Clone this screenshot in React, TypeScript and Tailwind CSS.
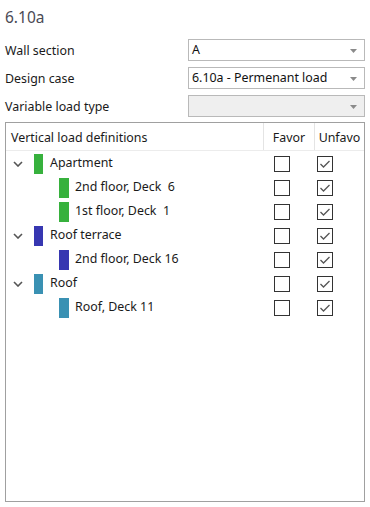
import React from 'react';

type Row = {
  label: string;
  color: string;
  level: number;
};

const rows: Row[] = [
  { label: 'Apartment', color: 'bg-[#37b13d]', level: 0 },
  { label: '2nd floor, Deck  6', color: 'bg-[#37b13d]', level: 1 },
  { label: '1st floor, Deck  1', color: 'bg-[#37b13d]', level: 1 },
  { label: 'Roof terrace', color: 'bg-[#3737b1]', level: 0 },
  { label: '2nd floor, Deck 16', color: 'bg-[#3737b1]', level: 1 },
  { label: 'Roof', color: 'bg-[#3a91b3]', level: 0 },
  { label: 'Roof, Deck 11', color: 'bg-[#3a91b3]', level: 1 },
];

function Arrow() {
  return (
    <svg width="7" height="4" viewBox="0 0 7 4" className="absolute right-[7px] top-[9px]">
      <path d="M0 0 H7 L3.5 4 Z" fill="#8a8a8a" />
    </svg>
  );
}

function Select({ value, disabled }: { value?: string; disabled?: boolean }) {
  return (
    <div
      className={`relative h-[22px] w-[177px] border border-[#b9b9b9] flex items-center pl-[3px] pt-[1px] ${
        disabled ? 'bg-[#efefef]' : 'bg-white'
      }`}
    >
      <span className="text-[#111]">{value}</span>
      <Arrow />
    </div>
  );
}

function Check({ checked }: { checked?: boolean }) {
  return (
    <div className="w-[16px] h-[16px] border-[1.5px] border-[#333] bg-white flex items-center justify-center">
      {checked && (
        <svg width="12" height="10" viewBox="0 0 12 10">
          <path d="M1.5 5 L4.5 8 L10.5 2" fill="none" stroke="#555" strokeWidth="1.3" />
        </svg>
      )}
    </div>
  );
}

function Chevron() {
  return (
    <svg width="10" height="6" viewBox="0 0 10 6">
      <path d="M1 1 L5 5 L9 1" fill="none" stroke="#555" strokeWidth="1.6" />
    </svg>
  );
}

export default function App() {
  return (
    <div
      className="w-[370px] h-[507px] bg-white flex flex-col text-[12.4px] text-[#1a1a1a]"
      style={{ fontFamily: '"Noto Sans", "Open Sans", sans-serif' }}
    >
      <div className="px-[5px] pt-[6px] h-[39px] text-[15.5px] text-[#4a4a55]">6.10a</div>

      <div className="flex flex-col gap-[6px] px-[5px]">
        <div className="flex items-center h-[22px]">
          <div className="w-[183px] pt-[2px]">Wall section</div>
          <Select value="A" />
        </div>
        <div className="flex items-center h-[22px]">
          <div className="w-[183px] pt-[2px]">Design case</div>
          <Select value="6.10a - Permenant load" />
        </div>
        <div className="flex items-center h-[22px]">
          <div className="w-[183px] pt-[2px]">Variable load type</div>
          <Select disabled />
        </div>
      </div>

      <div className="mx-[5px] mt-[5px] h-[380px] border border-[#a0a0a0] flex flex-col">
        <div className="flex h-[28px] border-b border-[#ececec]">
          <div className="w-[257px] pl-[5px] pt-[3px] flex items-center">Vertical load definitions</div>
          <div className="w-[51px] pt-[3px] border-l border-[#e4e4e4] flex items-center justify-center">Favor</div>
          <div className="flex-1 pt-[3px] border-l border-[#e4e4e4] flex items-center justify-center">Unfavo</div>
        </div>

        {rows.map((r, i) => (
          <div key={i} className="flex h-[24px] items-center pt-[1px]">
            <div className="w-[258px] flex items-center h-full">
              {r.level === 0 ? (
                <>
                  <div className="w-[28px] flex justify-start pl-[7px]">
                    <Chevron />
                  </div>
                  <div className={`w-[9px] h-[20px] ${r.color}`} />
                  <span className="pl-[7px]">{r.label}</span>
                </>
              ) : (
                <>
                  <div className="w-[53px]" />
                  <div className={`w-[10px] h-[20px] ${r.color}`} />
                  <span className="pl-[6px] whitespace-pre">{r.label}</span>
                </>
              )}
            </div>
            <div className="w-[53px] pl-[10px]">
              <Check />
            </div>
            <div className="flex-1">
              <Check checked />
            </div>
          </div>
        ))}
      </div>
    </div>
  );
}
